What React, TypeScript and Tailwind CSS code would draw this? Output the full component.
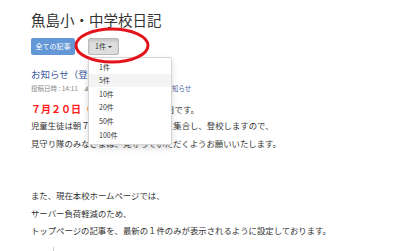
import { useState } from 'react';

const counts = ['1件', '5件', '10件', '20件', '50件', '100件'];

export default function App() {
  const [hovered, setHovered] = useState(1);

  return (
    <div
      className="relative h-[251px] w-[400px] overflow-hidden bg-white pl-[31px] pt-[11px] text-[#333]"
      style={{ fontFamily: '"Noto Sans CJK JP", "Noto Sans", sans-serif' }}
    >
      <h1 className="text-[14.5px] leading-[18px] font-normal">魚島小・中学校日記</h1>

      {/* toolbar */}
      <div className="relative mt-[9px] flex h-[17px] items-center gap-[13px]">
        <button className="flex h-[17px] w-[44px] items-center justify-center rounded-[2px] bg-[#6397d6] text-[7px] text-white">
          全ての記事
        </button>
        <div className="relative">
          <button className="flex h-[17px] w-[31px] items-center justify-center gap-[2px] rounded-[2px] border border-[#b9b9b9] bg-[#dedede] text-[7px] text-[#333] shadow-[inset_0_2px_3px_rgba(0,0,0,0.12)]">
            1件
            <span className="border-x-[2px] border-t-[2.5px] border-x-transparent border-t-[#333]" />
          </button>
          <ul className="absolute left-0 top-[19px] z-10 w-[84px] rounded-[2px] border border-[#d5d5d5] bg-white py-[2px] shadow-[0_3px_6px_rgba(0,0,0,0.15)]">
            {counts.map((c, i) => (
              <li
                key={c}
                onMouseEnter={() => setHovered(i)}
                className={`flex h-[13.6px] items-center pl-[10px] text-[7px] text-[#333] ${
                  i === hovered ? 'bg-[#f3f3f3]' : ''
                }`}
              >
                {c}
              </li>
            ))}
          </ul>
        </div>
        <svg className="pointer-events-none absolute left-[42px] top-[-11px] z-20" width="78" height="38" viewBox="0 0 78 38">
          <ellipse cx="39" cy="18.5" rx="36" ry="16.5" fill="none" stroke="#e3141c" strokeWidth="3" />
        </svg>
      </div>

      {/* article */}
      <div className="mt-[12px] text-[9.5px] leading-[14px] text-[#3d5a9e]">お知らせ（登校時の見守り）</div>
      <div className="mt-[3px] flex h-[10px] items-center text-[6.5px] text-[#888]">
        <span className="w-[134.5px] shrink-0">
          投稿日時 : 14:11<span className="ml-[6px] text-[#b0b0b0]">▲</span> カテゴリー
        </span>
        <span className="text-[#3d5a9e]">お知らせ</span>
      </div>

      <p className="mt-[8px] text-[8.4px] leading-[14px]">
        <span className="text-[10px] font-bold text-[#ff1a1a]">７月２０日（木）</span>
        <span className="ml-[5px]">は、終業式の日です。</span>
      </p>

      <div className="mt-[1px] text-[8.4px] leading-[17.5px]">
        <p>児童生徒は朝７時半に各地区の場所に集合し、登校しますので、</p>
        <p>見守り隊のみなさまは、見守っていただくようお願いいたします。</p>
        <p>&nbsp;</p>
        <p>&nbsp;</p>
        <p>また、現在本校ホームページでは、</p>
        <p>サーバー負荷軽減のため、</p>
        <p>トップページの記事を、最新の１件のみが表示されるように設定しております。</p>
      </div>
      <div className="ml-[22px] mt-[7px] h-[6px] w-px bg-[#cfcfcf]" />
    </div>
  );
}
